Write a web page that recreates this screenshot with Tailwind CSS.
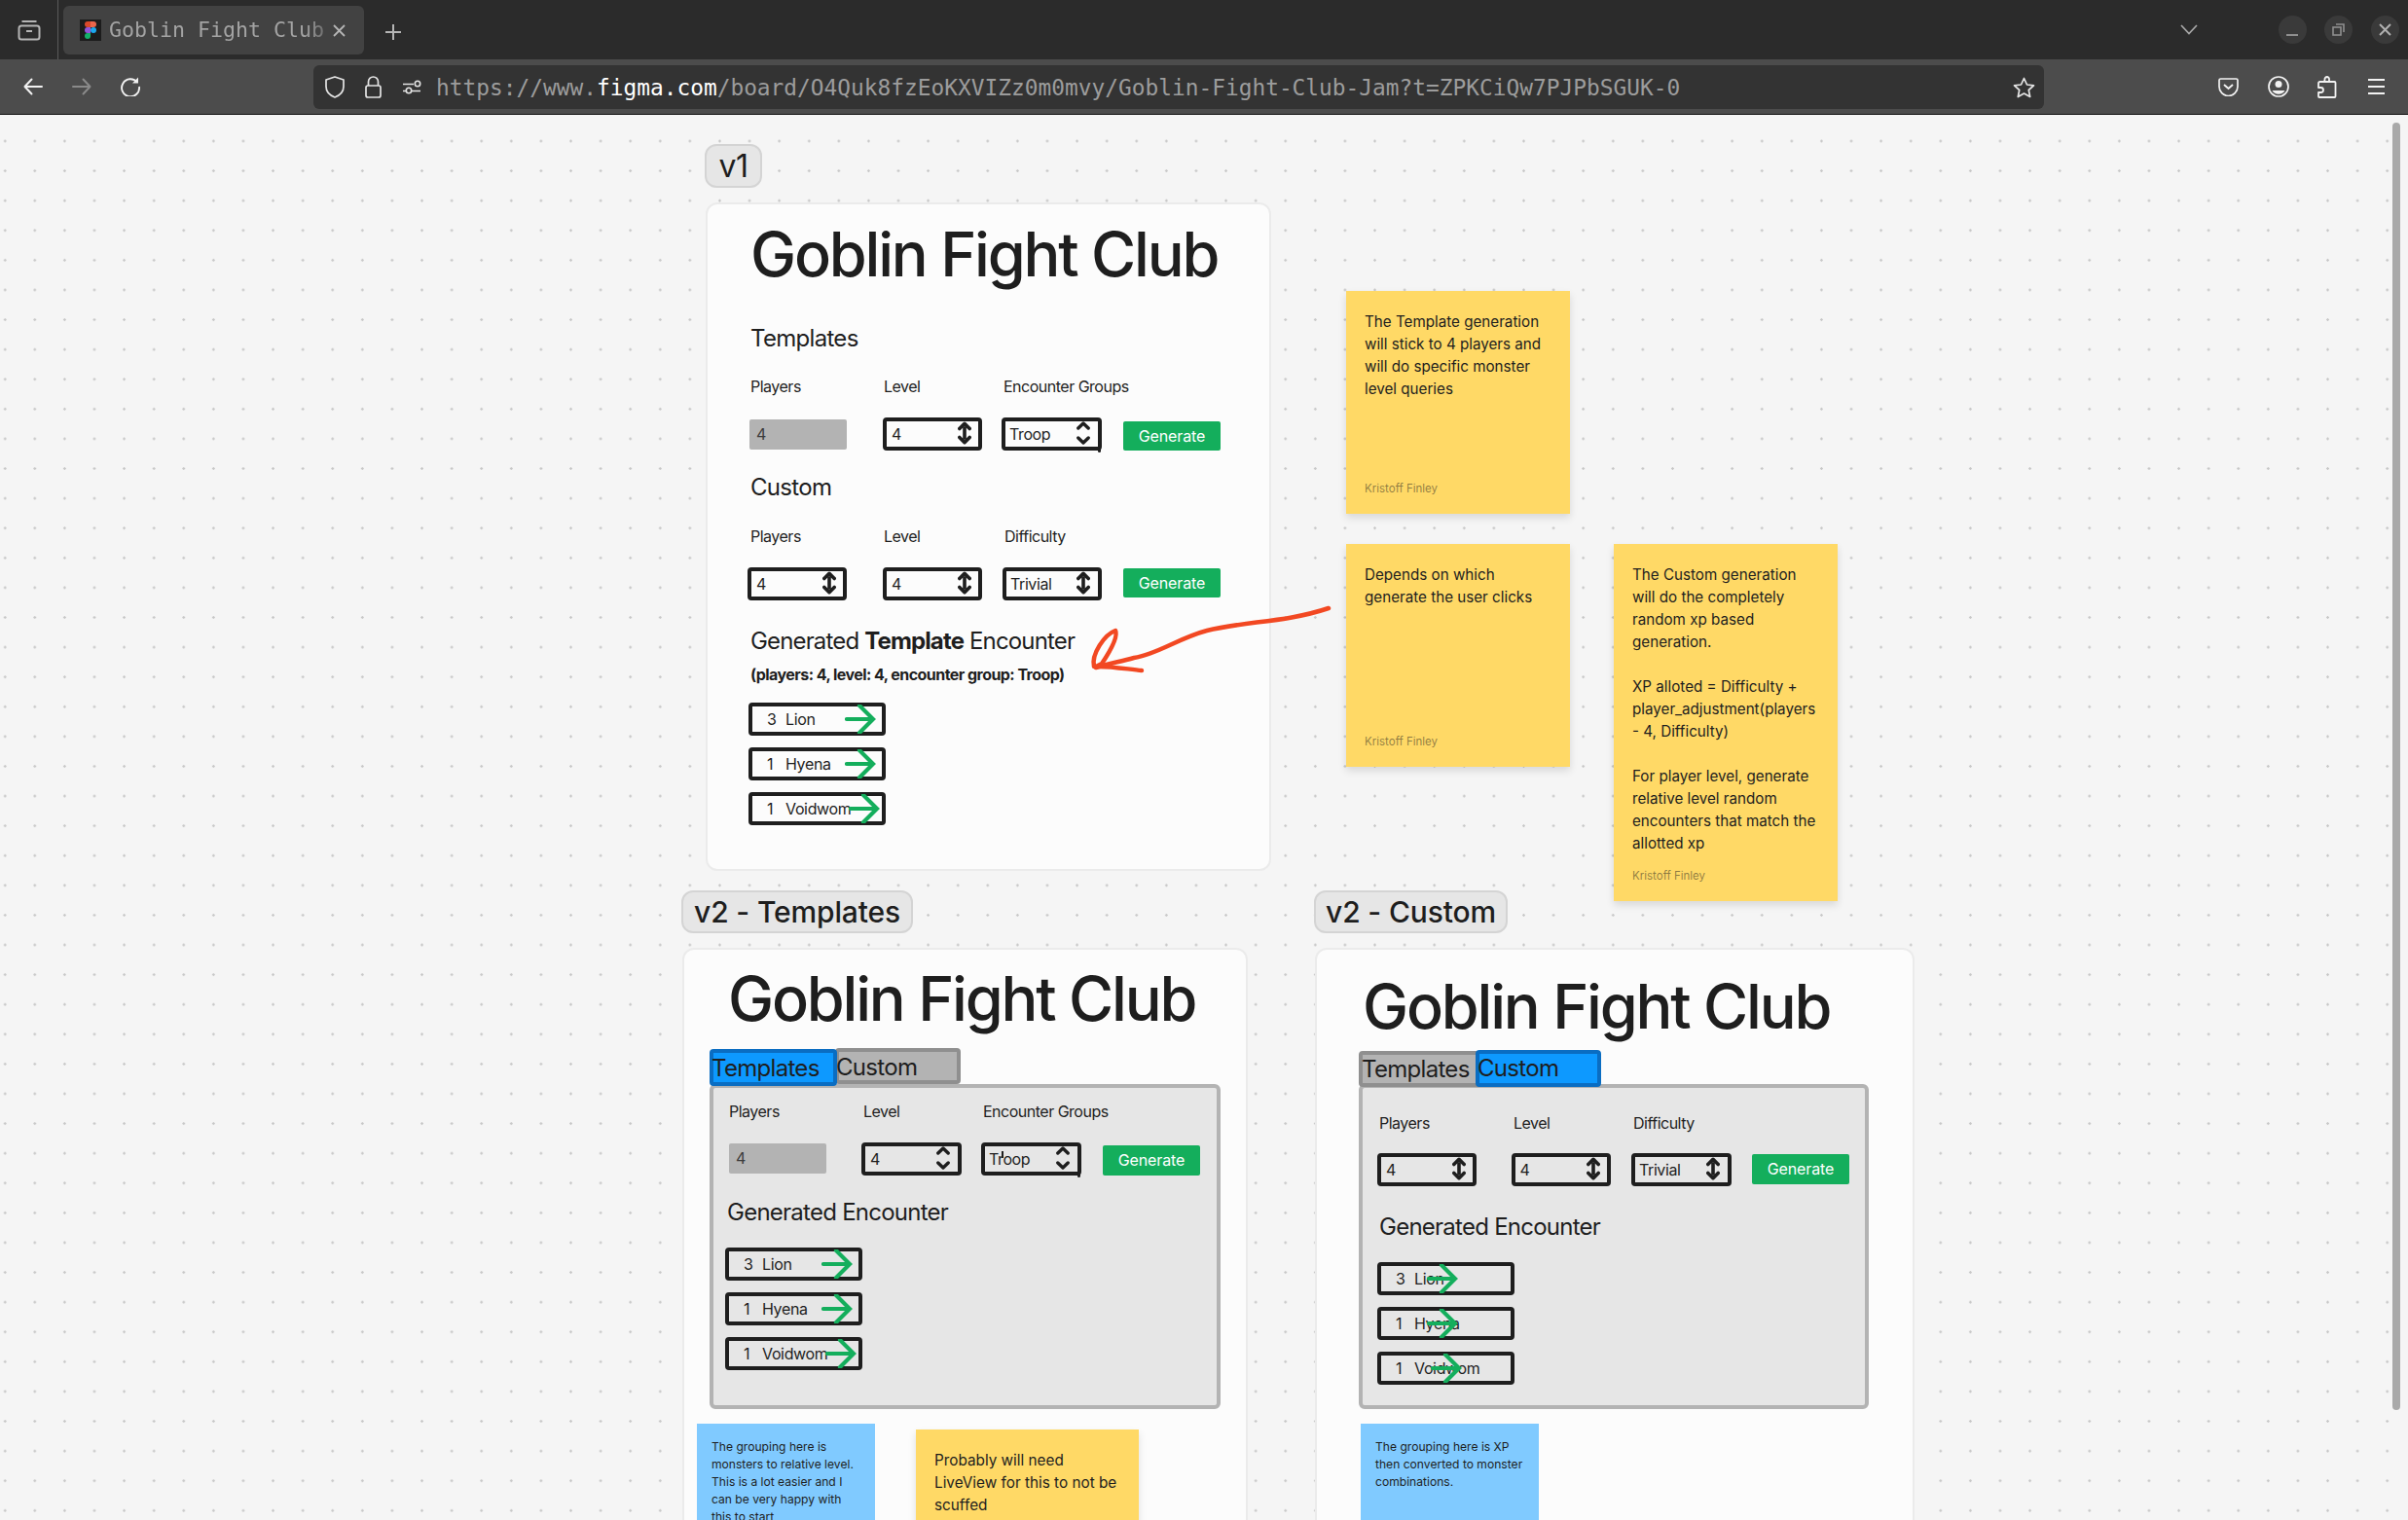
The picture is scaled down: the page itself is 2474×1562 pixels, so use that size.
<!doctype html>
<html>
<head>
<meta charset="utf-8">
<title>Goblin Fight Club</title>
<script src="https://cdn.jsdelivr.net/npm/@tailwindcss/browser@4"></script>
</head>
<body class="h-[1562px] w-[2474px] overflow-hidden bg-[#f5f5f5] font-['Inter',sans-serif] text-[#1e1e1e]">
<svg class="hidden">
  <defs>
    <symbol id="step" viewBox="0 0 14 24"><path d="M1.800 7.500 7 2.300l5.200 5.200M7 7v10M1.800 16.500 7 21.700l5.200-5.200" fill="none" stroke="#1e1e1e" stroke-width="3.600" stroke-linecap="round" stroke-linejoin="round"/></symbol>
    <symbol id="chev" viewBox="0 0 14 24"><path d="M1.800 7 7 2l5.200 5M1.800 17 7 22l5.200-5" fill="none" stroke="#1e1e1e" stroke-width="3.400" stroke-linecap="round" stroke-linejoin="round"/></symbol>
    <symbol id="go" viewBox="0 0 34 30"><path d="M2 15h27M15 1l14 14-14 14" fill="none" stroke="#14ae5c" stroke-width="4.200" stroke-linecap="round"/></symbol>
  </defs>
</svg>

<!-- tab strip -->
<div class="flex h-[61px] items-start bg-[#2b2b2b]">
  <div class="flex h-[61px] w-[60px] items-center justify-center border-r border-[#5a5a5a]">
    <svg width="24" height="24" viewBox="0 0 24 24" fill="none" stroke="#b5b5b5" stroke-width="2"><rect x="1.500" y="7.500" width="21" height="14" rx="2.500"/><path d="M4.500 3h15M9 13h6"/></svg>
  </div>
  <div class="ml-[5px] mt-[6px] flex h-[50px] w-[309px] items-center rounded-[6px] bg-[#424242] pl-[17px]">
    <div class="flex h-[22px] w-[22px] items-center justify-center bg-[#1c1c1c]">
      <svg width="12" height="19" viewBox="0 0 12 19"><path d="M3 0h3v6H3a3 3 0 0 1 0-6z" fill="#d9492b"/><path d="M6 0h3a3 3 0 0 1 0 6H6z" fill="#e8664c"/><path d="M3 6h3v6H3a3 3 0 0 1 0-6z" fill="#9254d8"/><circle cx="9" cy="9" r="3" fill="#1ba8ee"/><path d="M3 12h3v3a3 3 0 1 1-3-3z" fill="#15b06a"/></svg>
    </div>
    <span class="ml-[8px] w-[222px] overflow-hidden whitespace-nowrap font-['DejaVu_Sans_Mono',monospace] text-[21.6px] leading-[26px] text-[#a3a3a3] [mask-image:linear-gradient(to_right,black_90%,rgba(0,0,0,0.45)_100%)]">Goblin Fight Club</span>
    <svg class="ml-[8px]" width="13" height="13" viewBox="0 0 13 13" fill="none" stroke="#b5b5b5" stroke-width="1.800"><path d="M1 1l11 11M12 1 1 12"/></svg>
  </div>
  <svg class="ml-[21px] mt-[24px]" width="18" height="18" viewBox="0 0 18 18" fill="none" stroke="#b5b5b5" stroke-width="2"><path d="M9 1v16M1 9h16"/></svg>
  <div class="ml-auto flex h-[61px] items-center">
    <svg class="mr-[83px]" width="18" height="11" viewBox="0 0 18 11" fill="none" stroke="#a8a8a8" stroke-width="1.700"><path d="M1 1l8 8.500L17 1"/></svg>
    <div class="flex h-[29px] w-[29px] items-center justify-center rounded-full bg-[#3a3a3a]"><svg width="12" height="12" viewBox="0 0 12 12" fill="none" stroke="#8f8f8f" stroke-width="2"><path d="M0 11h12"/></svg></div>
    <div class="ml-[18px] flex h-[29px] w-[29px] items-center justify-center rounded-full bg-[#3a3a3a]"><svg width="13" height="13" viewBox="0 0 13 13" fill="none" stroke="#8f8f8f" stroke-width="1.600"><rect x="1" y="4" width="8" height="8"/><path d="M4 1h8v8"/></svg></div>
    <div class="ml-[19px] mr-[9.5px] flex h-[29px] w-[29px] items-center justify-center rounded-full bg-[#3a3a3a]"><svg width="13" height="13" viewBox="0 0 13 13" fill="none" stroke="#b0b0b0" stroke-width="2"><path d="M1 1l11 11M12 1 1 12"/></svg></div>
  </div>
</div>

<!-- toolbar -->
<div class="flex h-[57px] items-start border-b border-[#111111] bg-[#4c4c4c]">
  <div class="flex h-[56px] items-center pl-[24px]">
    <svg width="20" height="18" viewBox="0 0 20 18" fill="none" stroke="#f2f2f2" stroke-width="2" stroke-linecap="round" stroke-linejoin="round"><path d="M19 9H1.500M8.500 1.500 1.500 9l7 7.500"/></svg>
    <svg class="ml-[30px]" width="20" height="18" viewBox="0 0 20 18" fill="none" stroke="#8a8a8a" stroke-width="2" stroke-linecap="round" stroke-linejoin="round"><path d="M1 9h17.500M11.500 1.500 18.500 9l-7 7.500"/></svg>
    <svg class="ml-[30px]" width="20" height="20" viewBox="0 0 20 20" fill="none" stroke="#f2f2f2" stroke-width="1.900"><path d="M17 5.500A9 9 0 1 0 19 10"/><path d="M18 0.500V6.500H12" fill="#f2f2f2" stroke="none"/></svg>
  </div>
  <div class="ml-[178px] mt-[6px] flex h-[45px] w-[1778px] items-center rounded-[6px] bg-[#333333] pl-[12px] pr-[9px]">
    <svg width="20" height="23" viewBox="0 0 20 23" fill="none" stroke="#e4e4e4" stroke-width="1.700" stroke-linejoin="round"><path d="M10 1 19 4v7c0 5-4 9-9 11-5-2-9-6-9-11V4z"/></svg>
    <svg class="ml-[21px]" width="17" height="23" viewBox="0 0 17 23" fill="none" stroke="#e4e4e4" stroke-width="1.700"><rect x="1" y="10" width="15" height="12" rx="2"/><path d="M3.500 10V6a5 5 0 0 1 10 0v4"/></svg>
    <svg class="ml-[21px]" width="20" height="15" viewBox="0 0 20 15" fill="none" stroke="#e4e4e4" stroke-width="1.600"><path d="M1 4.500h11M1 11.500h3M10 11.500h9"/><circle cx="16" cy="4" r="2.700"/><circle cx="7" cy="11" r="2.700"/></svg>
    <span class="ml-[15px] whitespace-nowrap font-['DejaVu_Sans_Mono',monospace] text-[22.84px] leading-[28px] text-[#9c9c9c]">https://www.<span class="text-white">figma.com</span>/board/O4Quk8fzEoKXVIZz0m0mvy/Goblin-Fight-Club-Jam?t=ZPKCiQw7PJPbSGUK-0</span>
    <svg class="ml-auto" width="23" height="22" viewBox="0 0 23 22" fill="none" stroke="#e4e4e4" stroke-width="1.700" stroke-linejoin="round"><path d="M11.500 1.500 14.500 8l7 .8-5.200 4.700 1.400 7-6.200-3.500-6.200 3.500 1.400-7L1.500 8.800l7-.8z"/></svg>
  </div>
  <div class="flex h-[56px] items-center pl-[179px]">
    <svg width="21" height="19" viewBox="0 0 21 19" fill="none" stroke="#f2f2f2" stroke-width="1.700"><path d="M2.500 1h16A1.500 1.500 0 0 1 20 2.500V9a9.500 9.500 0 0 1-19 0V2.500A1.500 1.500 0 0 1 2.500 1z"/><path d="M6 7l4.500 4L15 7" stroke-width="1.900"/></svg>
    <svg class="ml-[30px]" width="22" height="22" viewBox="0 0 22 22" fill="none" stroke="#f2f2f2" stroke-width="1.700"><circle cx="11" cy="11" r="10"/><circle cx="11" cy="8.500" r="3.500" fill="#f2f2f2" stroke="none"/><path d="M4.500 15h13a7.500 7.500 0 0 1-13 0z" fill="#f2f2f2" stroke="none"/></svg>
    <svg class="ml-[29px]" width="20" height="23" viewBox="0 0 20 23" fill="none" stroke="#f2f2f2" stroke-width="1.800" stroke-linejoin="round"><path d="M7 6H12V4a2.500 2.500 0 0 0-2-3 2.500 2.500 0 0 0-2.500 3zM12 6h5.500a1 1 0 0 1 1 1v14a1 1 0 0 1-1 1H2a1 1 0 0 1-1-1v-4h2.500a2.500 2.500 0 0 0 0-5H1V7.500A1.500 1.500 0 0 1 2.500 6H7"/></svg>
    <div class="ml-[32px] flex w-[17px] flex-col gap-[5px]"><div class="h-[2px] bg-[#f2f2f2]"></div><div class="h-[2px] bg-[#f2f2f2]"></div><div class="h-[2px] bg-[#f2f2f2]"></div></div>
  </div>
</div>

<!-- board canvas -->
<div class="relative h-[1444px] overflow-hidden bg-[#f5f5f5] bg-[radial-gradient(circle,#c8c8c8_1px,transparent_1.5px)] bg-[size:30.6px_30.6px] bg-[position:-10.1px_11.7px]">

  <!-- v1 -->
  <div class="absolute left-[724px] top-[30px] flex h-[45px] w-[59px] items-center justify-center rounded-[12px] border-2 border-[#d4d4d4] bg-[#e6e6e6] text-[32px] leading-[40px] tracking-[-0.5px]">v1</div>
  <div class="absolute left-[725px] top-[90px] h-[687px] w-[581px] rounded-[12px] border-2 border-[#ebebeb] bg-[#fcfcfc] pl-[44px]">
    <div class="mt-[12px] h-[78px] whitespace-nowrap text-[63px] font-[450] leading-[78px] tracking-[-2.2px]">Goblin Fight Club</div>
    <div class="mt-[33px] text-[24px] leading-[30px] tracking-[-0.7px]">Templates</div>
    <div class="mt-[24px] grid grid-cols-[137px_122px_225px] text-[16px] leading-[20px] tracking-[-0.5px]"><div>Players</div><div>Level</div><div class="pl-[1px]">Encounter Groups</div></div>
    <div class="-ml-[1px] mt-[22px] grid h-[34px] grid-cols-[137px_122px_125px_100px]">
      <div class="mt-[2px] h-[31px] w-[100px] rounded-[2px] bg-[#b3b3b3] pl-[7px] text-[16px] leading-[31px] text-[#3c3c3c]">4</div>
      <div class="relative h-[34px] w-[102px] rounded-[4px] border-4 border-[#1e1e1e] pl-[5px] text-[16px] leading-[26px]">4<svg class="absolute right-[7px] top-0 h-[24px] w-[14px]"><use href="#step"/></svg></div>
      <div class="relative h-[34px] w-[103px] rounded-[4px] border-4 border-[#1e1e1e] pl-[4px] text-[16px] leading-[26px] tracking-[-0.4px]">Troop<svg class="absolute right-[8px] top-0 h-[24px] w-[14px]"><use href="#chev"/></svg><div class="absolute -bottom-[6px] -right-[3px] h-[5px] w-[3px] rounded-full bg-[#1e1e1e]"></div></div>
      <div class="mt-[4px] h-[30px] w-[100px] rounded-[2px] bg-[#14ae5c] text-center text-[16px] leading-[30px] tracking-[-0.1px] text-white">Generate</div>
    </div>
    <div class="mt-[23px] text-[24px] leading-[30px] tracking-[-0.7px]">Custom</div>
    <div class="mt-[25px] grid grid-cols-[137px_123px_225px] text-[16px] leading-[20px] tracking-[-0.5px]"><div>Players</div><div>Level</div><div class="pl-[1px]">Difficulty</div></div>
    <div class="-ml-[3px] mt-[22px] grid h-[34px] grid-cols-[139px_123px_124px_100px]">
      <div class="relative h-[34px] w-[102px] rounded-[4px] border-4 border-[#1e1e1e] pl-[5px] text-[16px] leading-[26px]">4<svg class="absolute right-[7px] top-0 h-[24px] w-[14px]"><use href="#step"/></svg></div>
      <div class="relative h-[34px] w-[102px] rounded-[4px] border-4 border-[#1e1e1e] pl-[5px] text-[16px] leading-[26px]">4<svg class="absolute right-[7px] top-0 h-[24px] w-[14px]"><use href="#step"/></svg></div>
      <div class="relative h-[34px] w-[102px] rounded-[4px] border-4 border-[#1e1e1e] pl-[4px] text-[16px] leading-[26px] tracking-[-0.4px]">Trivial<svg class="absolute right-[8px] top-0 h-[24px] w-[14px]"><use href="#step"/></svg></div>
      <div class="mt-[1px] h-[30px] w-[100px] rounded-[2px] bg-[#14ae5c] text-center text-[16px] leading-[30px] tracking-[-0.1px] text-white">Generate</div>
    </div>
    <div class="mt-[27px] text-[24px] leading-[30px] tracking-[-0.85px]">Generated <b class="font-bold">Template</b> Encounter</div>
    <div class="mt-[9px] text-[16px] font-bold leading-[20px] tracking-[-0.55px]">(players: 4, level: 4, encounter group: Troop)</div>
    <div class="-ml-[2px] mt-[19px] flex flex-col gap-[12px] text-[16px] leading-[26px] tracking-[-0.35px]">
      <div class="relative flex h-[34px] w-[141px] rounded-[4px] border-4 border-[#1e1e1e]"><span class="ml-[15px] w-[19px]">3</span><span>Lion</span><svg class="absolute left-[95px] top-[-2px] h-[30px] w-[34px]"><use href="#go"/></svg></div>
      <div class="relative flex h-[34px] w-[141px] rounded-[4px] border-4 border-[#1e1e1e]"><span class="ml-[15px] w-[19px]">1</span><span>Hyena</span><svg class="absolute left-[95px] top-[-2px] h-[30px] w-[34px]"><use href="#go"/></svg></div>
      <div class="relative flex h-[34px] w-[141px] rounded-[4px] border-4 border-[#1e1e1e]"><span class="ml-[15px] w-[19px]">1</span><span>Voidwom</span><svg class="absolute left-[99px] top-[-2px] h-[30px] w-[34px]"><use href="#go"/></svg></div>
    </div>
  </div>

  <!-- red arrow drawn on the board -->
  <svg class="absolute left-[1100px] top-[490px] h-[100px] w-[280px]" viewBox="1100 608 280 100" fill="none" stroke="#f24822" stroke-width="4.500" stroke-linecap="round" stroke-linejoin="round"><path d="M1365 625C1320 640 1280 638 1240 648 1210 656 1190 672 1165 676 1150 680 1135 683 1126 686"/><path d="M1173 689C1160 688 1140 684 1124 685 1121 672 1135 652 1146 648 1149 654 1140 670 1132 682L1126 685"/></svg>

  <!-- sticky notes -->
  <div class="absolute left-[1383px] top-[181px] flex h-[229px] w-[230px] flex-col bg-[#ffd966] pl-[19px] pt-[20px] pb-[19px] text-[15.2px] leading-[23px] shadow-[0_4px_8px_rgba(0,0,0,0.12)]">
    <div class="whitespace-nowrap">The Template generation<br>will stick to 4 players and<br>will do specific monster<br>level queries</div>
    <div class="mt-auto text-[11.5px] leading-[14px] text-[#1e1e1e]/50">Kristoff Finley</div>
  </div>
  <div class="absolute left-[1383px] top-[441px] flex h-[229px] w-[230px] flex-col bg-[#ffd966] pl-[19px] pt-[20px] pb-[19px] text-[15.2px] leading-[23px] shadow-[0_4px_8px_rgba(0,0,0,0.12)]">
    <div class="whitespace-nowrap">Depends on which<br>generate the user clicks</div>
    <div class="mt-auto text-[11.5px] leading-[14px] text-[#1e1e1e]/50">Kristoff Finley</div>
  </div>
  <div class="absolute left-[1658px] top-[441px] flex h-[367px] w-[230px] flex-col bg-[#ffd966] pl-[19px] pt-[20px] pb-[19px] text-[15.2px] leading-[23px] shadow-[0_4px_8px_rgba(0,0,0,0.12)]">
    <div class="whitespace-nowrap">The Custom generation<br>will do the completely<br>random xp based<br>generation.<br><br>XP alloted = Difficulty +<br>player_adjustment(players<br>- 4, Difficulty)<br><br>For player level, generate<br>relative level random<br>encounters that match the<br>allotted xp</div>
    <div class="mt-auto text-[11.5px] leading-[14px] text-[#1e1e1e]/50">Kristoff Finley</div>
  </div>

  <!-- v2 templates -->
  <div class="absolute left-[700px] top-[797px] flex h-[44px] w-[238px] items-center justify-center rounded-[12px] border-2 border-[#d4d4d4] bg-[#e6e6e6] text-[30px] font-[450] leading-[40px] tracking-[-0.15px]">v2 - Templates</div>
  <div class="absolute left-[701px] top-[856px] h-[800px] w-[581px] rounded-[12px] border-2 border-[#ebebeb] bg-[#fcfcfc]">
    <div class="ml-[45px] mt-[11px] h-[78px] whitespace-nowrap text-[63px] font-[450] leading-[78px] tracking-[-2.2px]">Goblin Fight Club</div>
    <div class="ml-[26px] mt-[13px] flex h-[36px] text-[24px] tracking-[-0.7px]">
      <div class="relative z-10 h-[38px] w-[131px] rounded-[4px] border-4 border-[#0a6dc2] bg-[#0d99ff] indent-[-2px] leading-[31px]">Templates</div>
      <div class="-ml-[2px] -mt-[1px] h-[37px] w-[129px] rounded-[4px] border-4 border-[#8f8f8f] bg-[#b3b3b3] indent-[-3px] leading-[31px]">Custom</div>
    </div>
    <div class="ml-[26px] h-[334px] w-[525px] rounded-[6px] border-4 border-[#b3b3b3] bg-[#e6e6e6] pl-[16px] pt-[14px]">
      <div class="grid grid-cols-[138px_122px_225px] text-[16px] leading-[20px] tracking-[-0.5px]"><div>Players</div><div>Level</div><div class="pl-[1px]">Encounter Groups</div></div>
      <div class="mt-[22px] grid h-[34px] grid-cols-[136px_123px_125px_100px]">
        <div class="mt-[1px] h-[31px] w-[100px] rounded-[2px] bg-[#b3b3b3] pl-[7px] text-[16px] leading-[31px] text-[#3c3c3c]">4</div>
        <div class="relative h-[34px] w-[103px] rounded-[4px] border-4 border-[#1e1e1e] pl-[5px] text-[16px] leading-[26px]">4<svg class="absolute right-[8px] top-0 h-[24px] w-[14px]"><use href="#chev"/></svg></div>
        <div class="relative h-[34px] w-[103px] rounded-[4px] border-4 border-[#1e1e1e] pl-[4px] text-[16px] leading-[26px] tracking-[-0.4px]">Troop<svg class="absolute right-[8px] top-0 h-[24px] w-[14px]"><use href="#chev"/></svg><div class="absolute -bottom-[6px] -right-[3px] h-[5px] w-[3px] rounded-full bg-[#1e1e1e]"></div><div class="absolute left-[17px] top-[5px] h-[7px] w-[2px] bg-[#1e1e1e]"></div></div>
        <div class="mt-[3px] h-[31px] w-[100px] rounded-[2px] bg-[#14ae5c] text-center text-[16px] leading-[31px] tracking-[-0.1px] text-white">Generate</div>
      </div>
      <div class="-ml-[2px] mt-[23px] text-[24px] leading-[30px] tracking-[-0.75px]">Generated Encounter</div>
      <div class="-ml-[4px] mt-[21px] flex flex-col gap-[12px] text-[16px] leading-[26px] tracking-[-0.35px]">
        <div class="relative flex h-[34px] w-[141px] rounded-[4px] border-4 border-[#1e1e1e]"><span class="ml-[15px] w-[19px]">3</span><span>Lion</span><svg class="absolute left-[95px] top-[-2px] h-[30px] w-[34px]"><use href="#go"/></svg></div>
        <div class="relative flex h-[34px] w-[141px] rounded-[4px] border-4 border-[#1e1e1e]"><span class="ml-[15px] w-[19px]">1</span><span>Hyena</span><svg class="absolute left-[95px] top-[-2px] h-[30px] w-[34px]"><use href="#go"/></svg></div>
        <div class="relative flex h-[34px] w-[141px] rounded-[4px] border-4 border-[#1e1e1e]"><span class="ml-[15px] w-[19px]">1</span><span>Voidwom</span><svg class="absolute left-[99px] top-[-2px] h-[30px] w-[34px]"><use href="#go"/></svg></div>
      </div>
    </div>
  </div>
  <div class="absolute left-[716px] top-[1345px] h-[120px] w-[183px] bg-[#80caff] pl-[15px] pt-[15px] text-[12.1px] leading-[18px]">
    <div class="whitespace-nowrap">The grouping here is<br>monsters to relative level.<br>This is a lot easier and I<br>can be very happy with<br>this to start</div>
  </div>
  <div class="absolute left-[941px] top-[1351px] h-[229px] w-[229px] bg-[#ffd966] pl-[19px] pt-[20px] text-[15.3px] leading-[23px] shadow-[0_4px_8px_rgba(0,0,0,0.12)]">
    <div class="whitespace-nowrap">Probably will need<br>LiveView for this to not be<br>scuffed</div>
  </div>

  <!-- v2 custom -->
  <div class="absolute left-[1350px] top-[797px] flex h-[44px] w-[199px] items-center justify-center rounded-[12px] border-2 border-[#d4d4d4] bg-[#e6e6e6] text-[30px] font-[450] leading-[40px] tracking-[-0.15px]">v2 - Custom</div>
  <div class="absolute left-[1351px] top-[856px] h-[800px] w-[616px] rounded-[12px] border-2 border-[#ebebeb] bg-[#fcfcfc]">
    <div class="ml-[47px] mt-[19px] h-[78px] whitespace-nowrap text-[63px] font-[450] leading-[78px] tracking-[-2.2px]">Goblin Fight Club</div>
    <div class="ml-[43px] mt-[6px] flex h-[35px] text-[24px] tracking-[-0.7px]">
      <div class="mt-[1px] h-[37px] w-[128px] rounded-[4px] border-4 border-[#8f8f8f] bg-[#b3b3b3] indent-[-1px] leading-[29px]">Templates</div>
      <div class="relative z-10 -ml-[8px] h-[38px] w-[129px] rounded-[4px] border-4 border-[#0a6dc2] bg-[#0d99ff] indent-[-2px] leading-[29px]">Custom</div>
    </div>
    <div class="ml-[43px] h-[334px] w-[524px] rounded-[6px] border-4 border-[#b3b3b3] bg-[#e6e6e6] pl-[17px] pt-[26px]">
      <div class="grid grid-cols-[138px_123px_225px] text-[16px] leading-[20px] tracking-[-0.5px]"><div>Players</div><div>Level</div><div>Difficulty</div></div>
      <div class="-ml-[2px] mt-[21px] grid h-[34px] grid-cols-[137.5px_123.5px_124px_100px]">
        <div class="relative h-[34px] w-[102px] rounded-[4px] border-4 border-[#1e1e1e] pl-[5px] text-[16px] leading-[26px]">4<svg class="absolute right-[7px] top-0 h-[24px] w-[14px]"><use href="#step"/></svg></div>
        <div class="relative h-[34px] w-[102px] rounded-[4px] border-4 border-[#1e1e1e] pl-[5px] text-[16px] leading-[26px]">4<svg class="absolute right-[7px] top-0 h-[24px] w-[14px]"><use href="#step"/></svg></div>
        <div class="relative h-[34px] w-[103px] rounded-[4px] border-4 border-[#1e1e1e] pl-[4px] text-[16px] leading-[26px] tracking-[-0.4px]">Trivial<svg class="absolute right-[8px] top-0 h-[24px] w-[14px]"><use href="#step"/></svg></div>
        <div class="mt-[1px] h-[31px] w-[100px] rounded-[2px] bg-[#14ae5c] text-center text-[16px] leading-[31px] tracking-[-0.1px] text-white">Generate</div>
      </div>
      <div class="mt-[27px] text-[24px] leading-[30px] tracking-[-0.75px]">Generated Encounter</div>
      <div class="-ml-[2px] mt-[21px] flex flex-col gap-[12px] text-[16px] leading-[26px] tracking-[-0.35px]">
        <div class="relative flex h-[34px] w-[141px] rounded-[4px] border-4 border-[#1e1e1e]"><span class="ml-[15px] w-[19px]">3</span><span>Lion</span><svg class="absolute left-[47px] top-[-2px] h-[30px] w-[34px]"><use href="#go"/></svg></div>
        <div class="relative flex h-[34px] w-[141px] rounded-[4px] border-4 border-[#1e1e1e]"><span class="ml-[15px] w-[19px]">1</span><span>Hyena</span><svg class="absolute left-[47px] top-[-2px] h-[30px] w-[34px]"><use href="#go"/></svg></div>
        <div class="relative flex h-[34px] w-[141px] rounded-[4px] border-4 border-[#1e1e1e]"><span class="ml-[15px] w-[19px]">1</span><span>Voidwom</span><svg class="absolute left-[51px] top-[-2px] h-[30px] w-[34px]"><use href="#go"/></svg></div>
      </div>
    </div>
  </div>
  <div class="absolute left-[1398px] top-[1345px] h-[120px] w-[183px] bg-[#80caff] pl-[15px] pt-[15px] text-[12.1px] leading-[18px]">
    <div class="whitespace-nowrap">The grouping here is XP<br>then converted to monster<br>combinations.</div>
  </div>

  <!-- scrollbar -->
  <div class="absolute left-[2458px] top-[8px] h-[1323px] w-[8px] rounded-full bg-[#a9a9a9]"></div>
</div>
</body>
</html>
